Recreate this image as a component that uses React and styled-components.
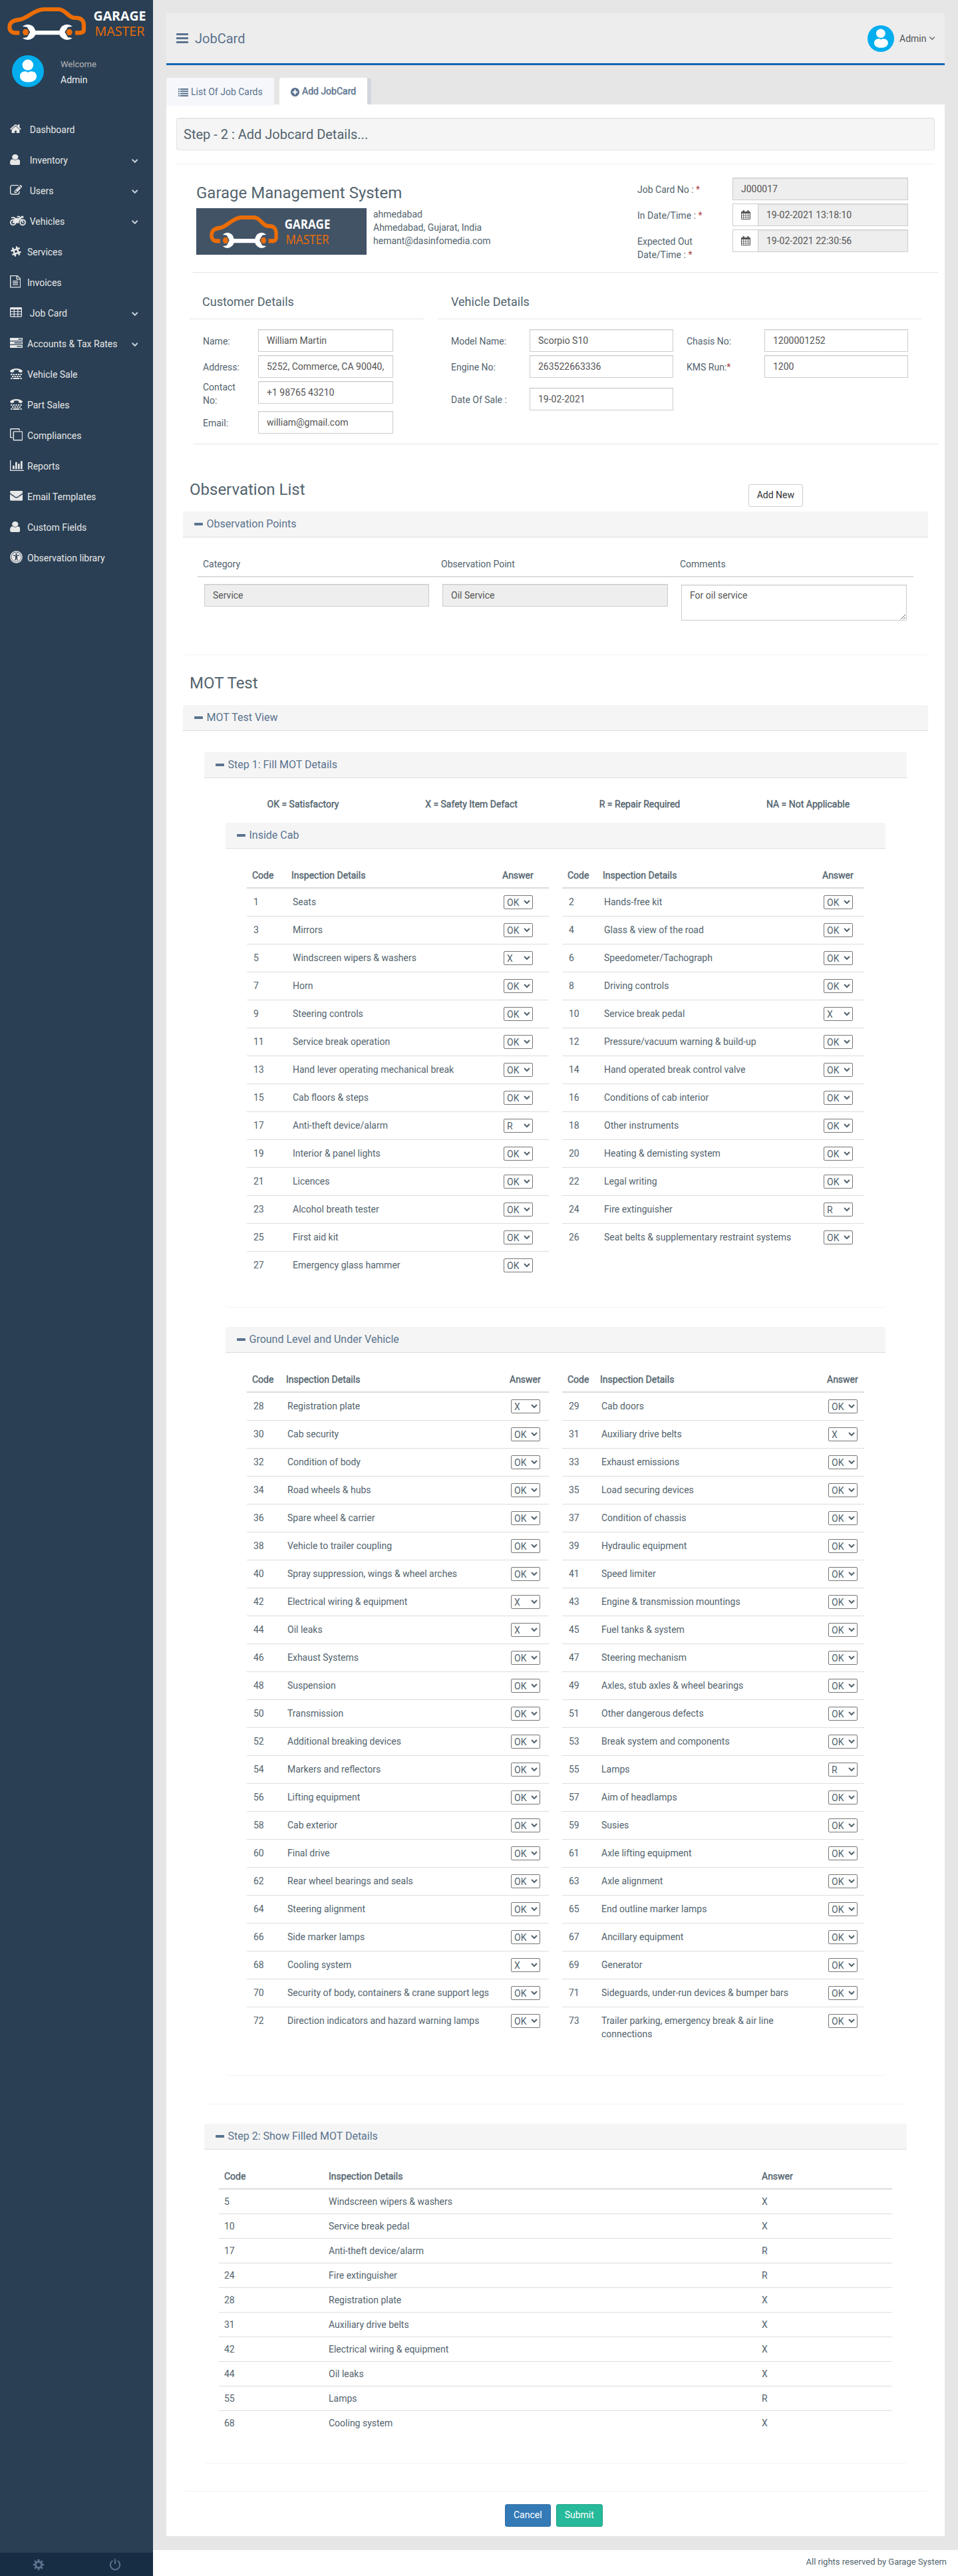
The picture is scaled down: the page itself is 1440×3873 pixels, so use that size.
import React from "react";
import styled, { createGlobalStyle, css } from "styled-components";
import { FaMotorcycle, FaSlackHash, FaTty, FaUniversalAccess } from "react-icons/fa";

const C = {
  text: "#53646e",
  link: "#5a738e",
  side: "#2a3f54",
  line: "#dddddd",
  inputText: "#555555",
};

const Global = createGlobalStyle`
  *, *::before, *::after { box-sizing: border-box; }
  body {
    margin: 0;
    font-family: Roboto, "Liberation Sans", sans-serif;
    font-size: 14px;
    line-height: 20px;
    color: ${C.text};
    background: #fff;
  }
  h1, h2, h3, p { margin: 0; font-weight: 400; }
`;

const heavy = css`
  font-weight: 400;
  -webkit-text-stroke: 0.4px currentColor;
`;

/* ---------- drawings ---------- */

const Glyph = ({ box, w, h, d, ...rest }) => (
  <svg viewBox={box} width={w} height={h} preserveAspectRatio="none" fill="currentColor" {...rest}>
    <path d={d} fillRule="evenodd" />
  </svg>
);

const P = {
  home: "M1472 992v480q0 26-19 45t-45 19h-384v-384h-256v384h-384q-26 0-45-19t-19-45v-480q0-1 .5-3t.5-3l575-474 575 474q1 2 1 6zm223-69l-62 74q-8 9-21 11h-3q-13 0-21-7l-692-577-692 577q-12 8-24 7-13-2-21-11l-62-74q-8-10-7-23.5t11-21.5l719-599q32-26 76-26t76 26l244 204v-195q0-14 9-23t23-9h192q14 0 23 9t9 23v408l219 182q10 8 11 21.5t-7 23.5z",
  user: "M1536 1399q0 109-62.5 187t-150.5 78h-854q-88 0-150.5-78t-62.5-187q0-85 8.5-160.5t31.5-152 58.5-131 94-89 134.5-34.5q131 128 313 128t313-128q76 0 134.5 34.5t94 89 58.5 131 31.5 152 8.5 160.5zm-256-887q0 159-112.5 271.5t-271.5 112.5-271.5-112.5-112.5-271.5 112.5-271.5 271.5-112.5 271.5 112.5 112.5 271.5z",
  edit: "M888 1184l116-116-152-152-116 116v56h96v96h56zm440-720q-16-16-33 1l-350 350q-17 17-1 33t33-1l350-350q17-17 1-33zm80 594v190q0 119-84.5 203.5t-203.5 84.5h-832q-119 0-203.5-84.5t-84.5-203.5v-832q0-119 84.5-203.5t203.5-84.5h832q63 0 117 25 15 7 18 23 3 17-9 29l-49 49q-14 14-32 8-23-6-45-6h-832q-66 0-113 47t-47 113v832q0 66 47 113t113 47h832q66 0 113-47t47-113v-126q0-13 9-22l64-64q15-15 35-7t20 29zm-96-738l288 288-672 672h-288v-288zm444 132l-92 92-288-288 92-92q28-28 68-28t68 28l152 152q28 28 28 68t-28 68z",
  file: "M1596 380q28 28 48 76t20 88v1152q0 40-28 68t-68 28h-1344q-40 0-68-28t-28-68v-1600q0-40 28-68t68-28h896q40 0 88 20t76 48zm-444-244v376h376q-10-29-22-41l-313-313q-12-12-41-22zm384 1528v-1024h-416q-40 0-68-28t-28-68v-416h-768v1536h1280zm-1024-864q0-14 9-23t23-9h704q14 0 23 9t9 23v64q0 14-9 23t-23 9h-704q-14 0-23-9t-9-23v-64zm736 224q14 0 23 9t9 23v64q0 14-9 23t-23 9h-704q-14 0-23-9t-9-23v-64q0-14 9-23t23-9h704zm0 256q14 0 23 9t9 23v64q0 14-9 23t-23 9h-704q-14 0-23-9t-9-23v-64q0-14 9-23t23-9h704z",
  table: "M1.5 0h15a1.5 1.5 0 0 1 1.5 1.5v11.700a1.500 1.500 0 0 1-1.500 1.500h-15a1.500 1.500 0 0 1-1.500-1.500v-11.700a1.500 1.500 0 0 1 1.500-1.500zM1.300 3.200v2.700h4.300v-2.700zM6.900 3.200v2.700h4.300v-2.700zM12.500 3.200v2.700h4.200v-2.700zM1.300 7v2.700h4.300v-2.700zM6.900 7v2.700h4.300v-2.700zM12.500 7v2.700h4.200v-2.700zM1.300 10.800v2.600h4.300v-2.600zM6.900 10.800v2.600h4.300v-2.600zM12.500 10.800v2.600h4.200v-2.600z",
  tasks: "M.6 0h18v4.200h-18zM12.500 1.300v1.400h5v-1.400zM.6 5.400h18v4.200h-18zM7 6.800v1.400h10.500v-1.400zM.6 10.800h18v4.200h-18zM10.500 12.200v1.400h7v-1.400z",
  clone: "M6 4.200h11.600a1.500 1.500 0 0 1 1.500 1.500v11.300a1.500 1.500 0 0 1-1.500 1.500h-11.600a1.500 1.500 0 0 1-1.500-1.500v-11.300a1.500 1.500 0 0 1 1.500-1.500zM6 5.600v11.500h11.700v-11.500zM1.500 0h11.600a1.500 1.500 0 0 1 1.500 1.500v1.700h-1.400v-1.800h-11.800v11.700h2.100v1.400h-2a1.500 1.500 0 0 1-1.500-1.500v-11.500a1.500 1.500 0 0 1 1.500-1.500z",
  chart: "M640 896v512h-256v-512h256zm384-512v1024h-256v-1024h256zm1024 1152v128h-2048v-1536h128v1408h1920zm-640-896v768h-256v-768h256zm384-384v1152h-256v-1152h256z",
  envelope: "M1792 710v794q0 66-47 113t-113 47h-1472q-66 0-113-47t-47-113v-794q44 49 101 87 362 246 497 345 57 42 92.500 65.500t94.500 48 110 24.500h2q51 0 110-24.500t94.500-48 92.500-65.500q170-123 498-345 57-39 100-87zm0-294q0 79-49 151t-122 123q-376 261-468 325-10 7-42.500 31t-54 38.500-52 32.500-57.500 27-50 9h-2q-23 0-50-9t-57.500-27-52-32.500-54-38.500-42.500-31q-91-64-262-182.500t-205-142.500q-62-42-117-115.500t-55-136.500q0-78 41.500-130t118.500-52h1472q65 0 112.500 47t47.500 113z",
  bars: "M1664 1344v128q0 26-19 45t-45 19h-1408q-26 0-45-19t-19-45v-128q0-26 19-45t45-19h1408q26 0 45 19t19 45zm0-512v128q0 26-19 45t-45 19h-1408q-26 0-45-19t-19-45v-128q0-26 19-45t45-19h1408q26 0 45 19t19 45zm0-512v128q0 26-19 45t-45 19h-1408q-26 0-45-19t-19-45v-128q0-26 19-45t45-19h1408q26 0 45 19t19 45z",
  plus: "M1344 960v-128q0-26-19-45t-45-19h-256v-256q0-26-19-45t-45-19h-128q-26 0-45 19t-19 45v256h-256q-26 0-45 19t-19 45v128q0 26 19 45t45 19h256v256q0 26 19 45t45 19h128q26 0 45-19t19-45v-256h256q26 0 45-19t19-45zm320-64q0 209-103 385.500t-279.500 279.500-385.500 103-385.500-103-279.500-279.500-103-385.500 103-385.500 279.500-279.500 385.500-103 385.500 103 279.500 279.500 103 385.500z",
  chevron: "M1683 808l-742 741q-19 19-45 19t-45-19l-742-741q-19-19-19-45.500t19-45.500l166-165q19-19 45-19t45 19l531 531 531-531q19-19 45-19t45 19l166 165q19 19 19 45.500t-19 45.500z",
  angle: "M1395 736q0 13-10 23l-466 466q-10 10-23 10t-23-10l-466-466q-10-10-10-23t10-23l50-50q10-10 23-10t23 10l393 393 393-393q10-10 23-10t23 10l50 50q10 10 10 23z",
  list: "M0 0h2v2h-2zM3 0h12v2h-12zM0 3.300h2v2h-2zM3 3.300h12v2h-12zM0 6.600h2v2h-2zM3 6.600h12v2h-12zM0 9.900h2v2h-2zM3 9.900h12v2h-12z",
  calendar: "M1 2h1.500v-1.200a.8.8 0 0 1 .8-.8h.8a.8.8 0 0 1 .8.800v1.200h4.200v-1.200a.8.8 0 0 1 .8-.8h.8a.8.8 0 0 1 .8.800v1.200h1.500a1 1 0 0 1 1 1v10a1 1 0 0 1-1 1h-12a1 1 0 0 1-1-1v-10a1 1 0 0 1 1-1zM1 5v2h2.300v-2zM4 5v2h2.600v-2zM7.300 5v2h2.700v-2zM10.700 5v2h2.300v-2zM1 7.800v2.200h2.300v-2.200zM4 7.800v2.200h2.600v-2.200zM7.300 7.800v2.200h2.700v-2.200zM10.700 7.800v2.200h2.300v-2.200zM1 10.800v2.200h2.300v-2.200zM4 10.800v2.200h2.600v-2.200zM7.300 10.800v2.200h2.700v-2.200zM10.700 10.800v2.200h2.300v-2.200z",
};

const HomeIcon = () => <Glyph box="64 250 1664 1286" w="17" h="13.500" d={P.home} />;
const UserIcon = () => <Glyph box="256 128 1280 1536" w="15.600" h="16" d={P.user} />;
const EditIcon = () => <Glyph box="0 128 1792 1408" w="18.600" h="14.700" d={P.edit} />;
const FileIcon = () => <Glyph box="128 0 1536 1792" w="16.300" h="18.500" d={P.file} />;
const TableIcon = () => <Glyph box="0 0 18 14.700" w="18" h="14.700" d={P.table} />;
const TasksIcon = () => <Glyph box="0.600 0 18 15" w="19" h="15" d={P.tasks} />;
const CloneIcon = () => <Glyph box="0 0 19.100 18.500" w="19.300" h="18.500" d={P.clone} />;
const ChartIcon = () => <Glyph box="0 128 2048 1536" w="21.300" h="16" d={P.chart} />;
const EnvelopeIcon = () => <Glyph box="0 256 1792 1408" w="19.300" h="14.700" d={P.envelope} />;
const MotoIcon = () => <FaMotorcycle size={24} />;
const SlackIcon = () => <FaSlackHash size={18} />;
const TtyIcon = () => <FaTty preserveAspectRatio="none" width={19} height={16} size={undefined} style={{ width: 19, height: 16 }} />;
const AccessIcon = () => <FaUniversalAccess size={19} />;

const Logo = ({ width }) => (
  <svg viewBox="11 10 208 50" width={width} height="50" preserveAspectRatio="none" overflow="visible">
    <g transform="scale(0.33333)">
      <path
        d="M88 148H70C50 148 43 136 43 122C43 98 62 92 86 89C124 84 150 45 195 42H266C296 44 306 76 332 80C350 80 378 80 378 114V134C378 144 370 148 360 148H339"
        fill="none" stroke="#eb6d07" strokeWidth="18.500"
      />
      <path
        d="M101 119Q126 102 148 118Q156 126 160 138H268Q272 126 280 118Q302 102 327 119L306 122L292 145L306 168L327 172Q302 188 280 172Q272 166 268 157H160Q156 166 148 172Q126 188 101 172L122 168L136 145L122 122Z"
        fill="#fff"
      />
      <path d="M108 132h15l7 13l-7 14h-15l-7-14zM305 132h15l7 13l-7 14h-15l-7-14z" fill="#eb6d07" />
    </g>
    <text x="140.500" y="31.200" fontFamily="Open Sans, Noto Sans, sans-serif" fontWeight="700" fontSize="19.800" textLength="79" lengthAdjust="spacingAndGlyphs" fill="#fff">GARAGE</text>
    <text x="142.500" y="54" fontFamily="Open Sans, Noto Sans, sans-serif" fontSize="19.800" textLength="75" lengthAdjust="spacingAndGlyphs" fill="#eb6d07">MASTER</text>
  </svg>
);

const Avatar = ({ size }) => (
  <svg viewBox="0 0 50 50" width={size} height={size}>
    <circle cx="25" cy="25" r="25" fill="#03aeef" />
    <ellipse cx="24.800" cy="15.300" rx="8.600" ry="8.500" fill="#fff" />
    <path d="M19 25.500Q22 24.500 25.300 27Q28 24.500 32 25.500C36 26 38.500 29 38.500 33C38.500 39 33 42.300 25.500 42.300C18 42.300 12.500 39 12.500 33C12.500 29 15 26 19 25.500Z" fill="#fff" />
  </svg>
);

const Gear = () => (
  <svg viewBox="-9 -9 18 18" width="18" height="18" fill="none" stroke={C.link}>
    <circle r="4.600" strokeWidth="3" />
    {[0, 45, 90, 135].map((a) => (
      <path key={a} d="M0 -8.300V-5M0 5V8.300" strokeWidth="2.600" transform={`rotate(${a})`} />
    ))}
  </svg>
);

const Power = () => (
  <svg viewBox="-9 -9 18 18" width="18" height="18" fill="none" stroke={C.link} strokeWidth="2">
    <path d="M-3.600 -6A7.200 7.200 0 1 0 3.600 -6M0 -8.500V-1" />
  </svg>
);

/* ---------- sidebar ---------- */

const Page = styled.div`
  display: flex;
  width: 1440px;
  height: 3873px;
`;

const Sidebar = styled.aside`
  width: 230px;
  flex: none;
  display: flex;
  flex-direction: column;
  background: ${C.side};
`;

const Brand = styled.div`
  padding: 10px 0 0 11px;
  height: 78px;
`;

const Profile = styled.div`
  display: flex;
  padding-left: 13px;
  height: 94px;
`;

const Ring = styled.div`
  width: 58px;
  height: 58px;
  padding: 4px;
  border-radius: 50%;
  border: 1px solid rgba(52, 73, 94, 0.5);
  display: flex;
  align-items: center;
  justify-content: center;
`;

const Greeting = styled.div`
  padding: 9px 0 0 20px;
  color: #ecf0f1;
`;

const Welcome = styled.div`
  font-size: 13px;
  line-height: 20px;
  color: #bab8b8;
  margin-bottom: 3px;
`;

const Menu = styled.nav`
  flex: 1;
`;

const MenuItem = styled.a`
  display: flex;
  align-items: center;
  height: 46px;
  padding: 0 23px 0 14.5px;
  color: #e7e7e7;
`;

const MenuIcon = styled.span`
  display: flex;
  flex: none;
  width: ${(p) => (p.$wide ? 30.200 : 26.500)}px;
  padding-bottom: 3px;
`;

const MenuText = styled.span`
  flex: 1;
  white-space: nowrap;
`;

const Caret = styled.span`
  display: flex;
  padding-top: 2px;
  color: #c4cfda;
`;

const SideFoot = styled.div`
  height: 35px;
  display: grid;
  grid-template-columns: 1fr 1fr;
  place-items: center;
  background: #172d44;
`;

/* ---------- main frame ---------- */

const Main = styled.div`
  flex: 1;
  display: flex;
  flex-direction: column;
`;

const Backdrop = styled.div`
  height: 3834px;
  padding: 20px 20px 0;
  background: #e6e6e6;
`;

const TopBar = styled.header`
  display: flex;
  align-items: center;
  height: 78px;
  padding: 0 15px;
  background: #ededed;
  border-bottom: 3px solid #1366b2;
`;

const Title = styled.h1`
  flex: 1;
  padding-left: 10px;
  font-size: 20px;
  line-height: 28px;
  color: ${C.link};
`;

const Account = styled.div`
  display: flex;
  align-items: center;
  gap: 8px;
  color: #515356;
`;

const AccountName = styled.span`
  display: flex;
  align-items: center;
  gap: 4px;
`;

const Tabs = styled.div`
  display: flex;
  align-items: flex-start;
  height: 40px;
  margin-top: 19px;
`;

const Tab = styled.a`
  display: flex;
  align-items: center;
  gap: 4px;
  color: ${C.link};
  ${(p) =>
    p.$active
      ? css`
          width: 138px;
          height: 40px;
          margin-left: 8px;
          padding-left: 17px;
          background: #fff;
          border-right: 6px solid #d1d7dd;
          border-radius: 4px 4px 0 0;
          ${heavy}
        `
      : css`
          width: 162px;
          height: 42px;
          padding-left: 18px;
          background: #f6f7fb;
          border-radius: 4px 0 0 0;
        `}
`;

const TabIcon = styled.span`
  display: flex;
  padding-top: ${(p) => p.$drop || 0}px;
`;

const Card = styled.section`
  height: 3656px;
  padding: 20px 15px 0;
  background: #fff;
`;

const StepBox = styled.h2`
  height: 49px;
  padding: 9px 10px;
  border: 1px solid #e3e3e3;
  border-radius: 3px;
  background: #f5f5f5;
  box-shadow: inset 0 1px 1px rgba(0, 0, 0, 0.05);
  font-size: 20px;
  line-height: 30px;
`;

const Rule = styled.hr`
  height: 1px;
  border: 0;
  margin: ${(p) => p.$m || "0"};
  background: ${(p) => p.$c || "#e5e5e5"};
`;

const PageFoot = styled.footer`
  flex: 1;
  padding: 8px 17px 0 0;
  font-size: 13px;
  text-align: right;
`;

/* ---------- forms ---------- */

const Input = styled.input`
  display: block;
  width: 100%;
  min-width: 0;
  height: 34px;
  padding: 6px 12px;
  border: 1px solid #ccc;
  border-radius: 0;
  background: ${(p) => (p.readOnly ? "#eee" : "#fff")};
  box-shadow: inset 0 1px 1px rgba(0, 0, 0, 0.075);
  font: inherit;
  color: ${C.inputText};
`;

const Area = styled.textarea`
  display: block;
  width: 100%;
  height: 54px;
  margin: 1px 0 0;
  padding: 5px 12px;
  border: 1px solid #ccc;
  border-radius: 0;
  box-shadow: inset 0 1px 1px rgba(0, 0, 0, 0.075);
  font: inherit;
  color: ${C.inputText};
`;

const Addon = styled.span`
  flex: none;
  width: 38px;
  display: flex;
  align-items: center;
  justify-content: center;
  border: 1px solid #ccc;
  border-right: 0;
  color: #555;
`;

const DateBox = styled.div`
  display: flex;
`;

const Star = styled.span`
  color: #a94442;
`;

const Label = styled.label`
  padding-top: ${(p) => (p.$pt === undefined ? 8 : p.$pt)}px;
`;

const Company = styled.div`
  display: grid;
  grid-template-columns: 663px 143px 264px;
  height: 142px;
  padding: 20px 0 0 30px;
`;

const CompanyInfo = styled.div`
  padding-top: 8px;
`;

const Heading = styled.h2`
  font-size: 24px;
  line-height: 30px;
`;

const CompanyRow = styled.div`
  display: flex;
  gap: 10px;
  margin-top: 8px;
`;

const LogoBox = styled.div`
  width: 256px;
  height: 70px;
  padding: 10px 0 0 19.600px;
  background: #425366;
`;

const Stack = styled.div`
  display: grid;
  grid-auto-rows: 34px;
  row-gap: 5px;
  align-content: start;
`;

const Address = styled.p`
  margin-top: -1px;
  white-space: pre-line;
`;

const Columns = styled.div`
  display: grid;
  grid-template-columns: 353px 727px;
  column-gap: 20px;
  height: 257px;
  padding-left: 20px;
`;

const SubHead = styled.h3`
  height: 70px;
  padding: 34px 0 0 ${(p) => p.$pl || 19}px;
  font-size: 18px;
  line-height: 20px;
  border-bottom: 1px solid #e5e5e5;
`;

const FieldGrid = styled.div`
  display: grid;
  grid-template-columns: ${(p) => p.$cols};
  grid-template-rows: ${(p) => p.$rows};
  align-items: start;
  padding: 15px 0 0 20px;
`;

const Tall = styled(Label)`
  width: 60px;
  padding-top: 0;
  margin-top: -1px;
`;

/* ---------- panels and tables ---------- */

const ListHead = styled.div`
  display: flex;
  justify-content: space-between;
  align-items: flex-start;
  height: 48px;
  margin-top: 53px;
  padding: 0 198px 0 20px;
`;

const Button = styled.button`
  height: 34px;
  margin-top: ${(p) => p.$mt || 0}px;
  padding: 0 12px 2px;
  border: 1px solid ${(p) => p.$edge || "#ccc"};
  border-radius: 3px;
  background: ${(p) => p.$bg || "#fff"};
  color: ${(p) => (p.$bg ? "#fff" : "#333")};
  font: inherit;
`;

const Panel = styled.section`
  margin: ${(p) => p.$m || "0"};
  height: ${(p) => p.$h || "auto"};
  padding-bottom: ${(p) => p.$pb || 0}px;
  border-radius: 4px;
  box-shadow: 0 1px 1px rgba(0, 0, 0, 0.05);
`;

const PanelHead = styled.h3`
  display: flex;
  align-items: center;
  gap: 5.500px;
  height: 39px;
  padding: 0 17px 0;
  border-bottom: 1px solid #ddd;
  border-radius: 3px 3px 0 0;
  background: #f5f5f5;
  color: ${C.link};
  font-size: 16px;
`;

const Dash = styled.span`
  width: 13px;
  height: 4px;
  border-radius: 1px;
  background: currentColor;
`;

const PanelBody = styled.div`
  padding: ${(p) => p.$p};
`;

const Legend = styled.div`
  display: grid;
  grid-template-columns: repeat(4, 253px);
  padding: 29px 0 18px 22px;
  text-align: center;
  ${heavy}
`;

const Pair = styled.div`
  display: grid;
  grid-template-columns: 454px 454px;
  column-gap: 20px;
  align-items: start;
  padding: 22px 32px 0;
`;

const HeadRow = styled.div`
  display: grid;
  grid-template-columns: ${(p) => p.$cols};
  border-bottom: 2px solid ${C.line};
  ${(p) => !p.$plain && heavy}
`;

const HeadCell = styled.div`
  padding: 8px;
`;

const Row = styled.div`
  display: grid;
  grid-template-columns: ${(p) => p.$cols};
  border-bottom: 1px solid ${C.line};
  &:last-child {
    border-bottom-color: transparent;
  }
`;

const Cell = styled.div`
  padding: ${(p) => (p.$tight ? "8px" : "10px")};
`;

const Answer = styled.select`
  display: block;
  width: 44px;
  height: 21px;
  margin: 0;
  padding: 0;
  border: 1px solid #767676;
  border-radius: 2px;
  background: #fff;
  color: ${C.text};
  font: inherit;
`;

const Actions = styled.div`
  display: flex;
  gap: 8px;
  padding: 20px 0 0 494px;
`;

/* ---------- data ---------- */

const MENU = [
  ["Dashboard", HomeIcon, true, false],
  ["Inventory", UserIcon, true, true],
  ["Users", EditIcon, true, true],
  ["Vehicles", MotoIcon, true, true],
  ["Services", SlackIcon, false, false],
  ["Invoices", FileIcon, false, false],
  ["Job Card", TableIcon, true, true],
  ["Accounts & Tax Rates", TasksIcon, false, true],
  ["Vehicle Sale", TtyIcon, false, false],
  ["Part Sales", TtyIcon, false, false],
  ["Compliances", CloneIcon, false, false],
  ["Reports", ChartIcon, false, false],
  ["Email Templates", EnvelopeIcon, false, false],
  ["Custom Fields", UserIcon, false, false],
  ["Observation library", AccessIcon, false, false],
];

const CAB = [
  "Seats", "Hands-free kit", "Mirrors", "Glass & view of the road", "Windscreen wipers & washers",
  "Speedometer/Tachograph", "Horn", "Driving controls", "Steering controls", "Service break pedal",
  "Service break operation", "Pressure/vacuum warning & build-up", "Hand lever operating mechanical break",
  "Hand operated break control valve", "Cab floors & steps", "Conditions of cab interior",
  "Anti-theft device/alarm", "Other instruments", "Interior & panel lights", "Heating & demisting system",
  "Licences", "Legal writing", "Alcohol breath tester", "Fire extinguisher", "First aid kit",
  "Seat belts & supplementary restraint systems", "Emergency glass hammer",
].map((name, i) => [i + 1, name]);

const GROUND = [
  "Registration plate", "Cab doors", "Cab security", "Auxiliary drive belts", "Condition of body",
  "Exhaust emissions", "Road wheels & hubs", "Load securing devices", "Spare wheel & carrier",
  "Condition of chassis", "Vehicle to trailer coupling", "Hydraulic equipment",
  "Spray suppression, wings & wheel arches", "Speed limiter", "Electrical wiring & equipment",
  "Engine & transmission mountings", "Oil leaks", "Fuel tanks & system", "Exhaust Systems",
  "Steering mechanism", "Suspension", "Axles, stub axles & wheel bearings", "Transmission",
  "Other dangerous defects", "Additional breaking devices", "Break system and components",
  "Markers and reflectors", "Lamps", "Lifting equipment", "Aim of headlamps", "Cab exterior", "Susies",
  "Final drive", "Axle lifting equipment", "Rear wheel bearings and seals", "Axle alignment",
  "Steering alignment", "End outline marker lamps", "Side marker lamps", "Ancillary equipment",
  "Cooling system", "Generator", "Security of body, containers & crane support legs",
  "Sideguards, under-run devices & bumper bars", "Direction indicators and hazard warning lamps",
  "Trailer parking, emergency break & air line connections",
].map((name, i) => [i + 28, name]);

const MARKED = { 5: "X", 10: "X", 17: "R", 24: "R", 28: "X", 31: "X", 42: "X", 44: "X", 55: "R", 68: "X" };
const ALL = [...CAB, ...GROUND];
const odd = (_, i) => i % 2 === 0;
const even = (_, i) => i % 2 === 1;

/* ---------- composed parts ---------- */

const Head = ({ children }) => (
  <PanelHead>
    <Dash />
    {children}
  </PanelHead>
);

const CheckTable = ({ cols, rows }) => (
  <div>
    <HeadRow $cols={cols}>
      <HeadCell>Code</HeadCell>
      <HeadCell>Inspection Details</HeadCell>
      <HeadCell>Answer</HeadCell>
    </HeadRow>
    <div>
      {rows.map(([code, name]) => (
        <Row key={code} $cols={cols}>
          <Cell>{code}</Cell>
          <Cell>{name}</Cell>
          <Cell>
            <Answer defaultValue={MARKED[code] || "OK"}>
              <option>OK</option>
              <option>X</option>
              <option>R</option>
              <option>NA</option>
            </Answer>
          </Cell>
        </Row>
      ))}
    </div>
  </div>
);

const DateField = ({ value }) => (
  <DateBox>
    <Addon>
      <Glyph box="0 0 14 14" w="14" h="14" d={P.calendar} />
    </Addon>
    <Input readOnly value={value} />
  </DateBox>
);

const SideNav = () => (
  <Sidebar>
    <Brand>
      <Logo width="208" />
    </Brand>
    <Profile>
      <Ring>
        <Avatar size="50" />
      </Ring>
      <Greeting>
        <Welcome>Welcome</Welcome>
        Admin
      </Greeting>
    </Profile>
    <Menu>
      {MENU.map(([name, Icon, wide, more]) => (
        <MenuItem key={name}>
          <MenuIcon $wide={wide}>
            <Icon />
          </MenuIcon>
          <MenuText>{name}</MenuText>
          {more && (
            <Caret>
              <Glyph box="90 530 1612 1040" w="9.500" h="6" d={P.chevron} />
            </Caret>
          )}
        </MenuItem>
      ))}
    </Menu>
    <SideFoot>
      <Gear />
      <Power />
    </SideFoot>
  </Sidebar>
);

const STEP2 = "157px 651px 204px";

export default function App() {
  return (
    <Page>
      <Global />
      <SideNav />
      <Main>
        <Backdrop>
          <TopBar>
            <Glyph box="128 256 1536 1280" w="18" h="15" d={P.bars} color={C.link} />
            <Title>JobCard</Title>
            <Account>
              <Avatar size="40" />
              <AccountName>
                Admin
                <Glyph box="397 653 998 582" w="8.500" h="5" d={P.angle} />
              </AccountName>
            </Account>
          </TopBar>
          <Tabs>
            <Tab>
              <TabIcon $drop={1}>
                <Glyph box="0 0 15 11.900" w="15" h="12" d={P.list} />
              </TabIcon>
              List Of Job Cards
            </Tab>
            <Tab $active>
              <TabIcon $drop={2}>
                <Glyph box="128 128 1536 1536" w="13" h="13" d={P.plus} />
              </TabIcon>
              Add JobCard
            </Tab>
          </Tabs>
          <Card>
            <StepBox>Step - 2 : Add Jobcard Details...</StepBox>
            <Rule $m="20px 0 0" $c="#eeeeee" />
            <Company>
              <CompanyInfo>
                <Heading>Garage Management System</Heading>
                <CompanyRow>
                  <LogoBox>
                    <Logo width="181" />
                  </LogoBox>
                  <Address>{"ahmedabad\nAhmedabad, Gujarat, India\nhemant@dasinfomedia.com"}</Address>
                </CompanyRow>
              </CompanyInfo>
              <Stack>
                <Label>Job Card No : <Star>*</Star></Label>
                <Label>In Date/Time : <Star>*</Star></Label>
                <Label>Expected Out<br />Date/Time : <Star>*</Star></Label>
              </Stack>
              <Stack>
                <Input readOnly value="J000017" />
                <DateField value="19-02-2021 13:18:10" />
                <DateField value="19-02-2021 22:30:56" />
              </Stack>
            </Company>
            <Rule $m="20px -5px 0 25px" />
            <Columns>
              <div>
                <SubHead>Customer Details</SubHead>
                <FieldGrid $cols="83px 203px" $rows="39px 39px 45px 34px">
                  <Label>Name:</Label>
                  <Input defaultValue="William Martin" />
                  <Label>Address:</Label>
                  <Input defaultValue="5252, Commerce, CA 90040, USA" />
                  <Tall>Contact No:</Tall>
                  <Input defaultValue="+1 98765 43210" />
                  <Label>Email:</Label>
                  <Input defaultValue="william@gmail.com" />
                </FieldGrid>
              </div>
              <div>
                <SubHead $pl={20}>Vehicle Details</SubHead>
                <FieldGrid $cols="118px 216px 20px 117px 216px" $rows="39px 49px 34px">
                  <Label>Model Name:</Label>
                  <Input defaultValue="Scorpio S10" />
                  <span />
                  <Label>Chasis No:</Label>
                  <Input defaultValue="1200001252" />
                  <Label>Engine No:</Label>
                  <Input defaultValue="263522663336" />
                  <span />
                  <Label>KMS Run:<Star>*</Star></Label>
                  <Input defaultValue="1200" />
                  <Label>Date Of Sale :</Label>
                  <Input defaultValue="19-02-2021" />
                </FieldGrid>
              </div>
            </Columns>
            <Rule $m="0 -5px 0 25px" />

            <ListHead>
              <Heading>Observation List</Heading>
              <Button $mt={7}>Add New</Button>
            </ListHead>
            <Panel $m="0 10px" $h="215px">
              <Head>Observation Points</Head>
              <PanelBody $p="22px 22px 0">
                <HeadRow $plain $cols="358px 359px 359px">
                  <HeadCell>Category</HeadCell>
                  <HeadCell>Observation Point</HeadCell>
                  <HeadCell>Comments</HeadCell>
                </HeadRow>
                <Row $cols="358px 359px 359px">
                  <Cell><Input readOnly value="Service" /></Cell>
                  <Cell><Input readOnly value="Oil Service" /></Cell>
                  <Cell><Area defaultValue="For oil service" /></Cell>
                </Row>
              </PanelBody>
            </Panel>

            <PanelBody $p="28px 0 18px 20px">
              <Heading>MOT Test</Heading>
            </PanelBody>
            <Panel $m="0 10px" $h="2685px">
              <Head>MOT Test View</Head>
              <PanelBody $p="32px 32px 0">
                <Panel $h="2032px">
                  <Head>Step 1: Fill MOT Details</Head>
                  <Legend>
                    <span>OK = Satisfactory</span>
                    <span>X = Safety Item Defact</span>
                    <span>R = Repair Required</span>
                    <span>NA = Not Applicable</span>
                  </Legend>
                  <Panel $m="0 32px" $pb={41}>
                    <Head>Inside Cab</Head>
                    <Pair>
                      <CheckTable cols="59px 317px 78px" rows={CAB.filter(odd)} />
                      <CheckTable cols="53px 330px 71px" rows={CAB.filter(even)} />
                    </Pair>
                  </Panel>
                  <Panel $m="30px 32px 0" $pb={41}>
                    <Head>Ground Level and Under Vehicle</Head>
                    <Pair>
                      <CheckTable cols="51px 336px 67px" rows={GROUND.filter(odd)} />
                      <CheckTable cols="49px 341px 64px" rows={GROUND.filter(even)} />
                    </Pair>
                  </Panel>
                </Panel>
                <Panel $m="30px 0 0" $pb={41}>
                  <Head>Step 2: Show Filled MOT Details</Head>
                  <PanelBody $p="22px 22px 0">
                    <HeadRow $cols={STEP2}>
                      <HeadCell>Code</HeadCell>
                      <HeadCell>Inspection Details</HeadCell>
                      <HeadCell>Answer</HeadCell>
                    </HeadRow>
                    <div>
                      {ALL.filter(([code]) => MARKED[code]).map(([code, name]) => (
                        <Row key={code} $cols={STEP2}>
                          <Cell $tight>{code}</Cell>
                          <Cell $tight>{name}</Cell>
                          <Cell $tight>{MARKED[code]}</Cell>
                        </Row>
                      ))}
                    </div>
                  </PanelBody>
                </Panel>
              </PanelBody>
            </Panel>
            <Actions>
              <Button $bg="#337ab7" $edge="#2e6da4">Cancel</Button>
              <Button $bg="#26b99a" $edge="#169f85">Submit</Button>
            </Actions>
          </Card>
        </Backdrop>
        <PageFoot>All rights reserved by Garage System</PageFoot>
      </Main>
    </Page>
  );
}
